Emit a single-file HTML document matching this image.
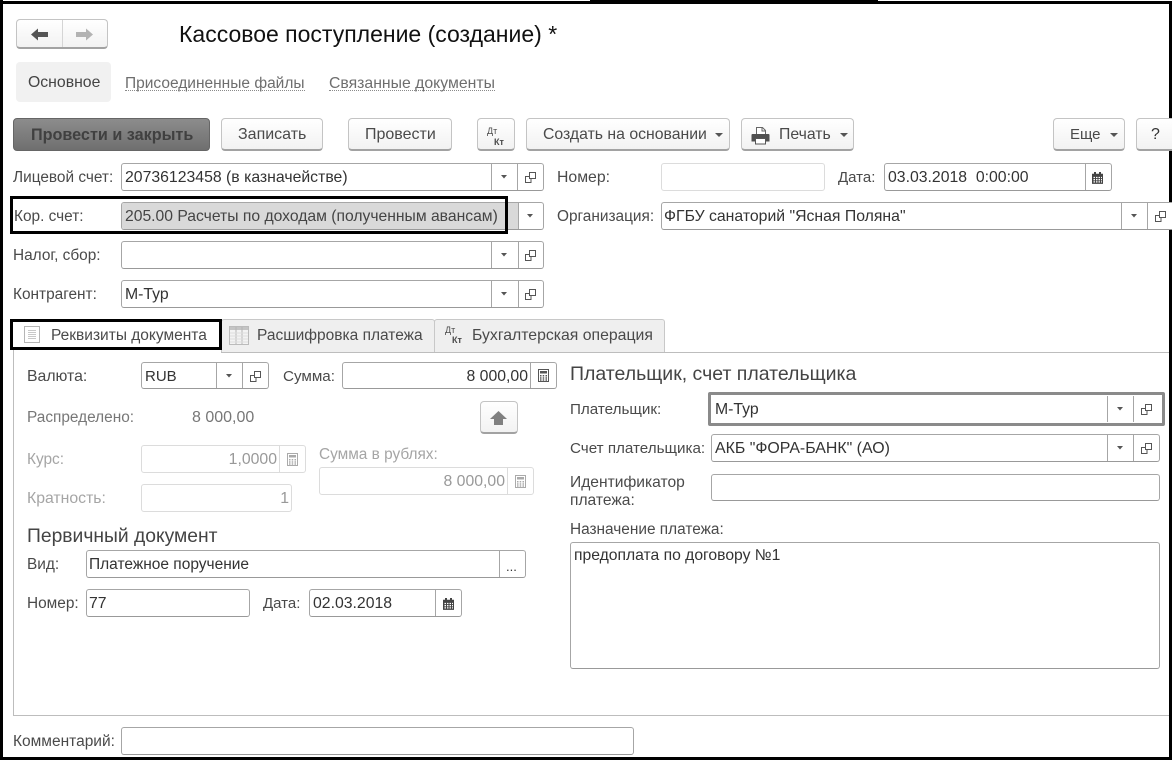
<!DOCTYPE html>
<html lang="ru"><head><meta charset="utf-8"><title>Кассовое поступление</title>
<style>
html,body{margin:0;padding:0;background:#fff}
#p{position:relative;width:1172px;height:760px;overflow:hidden;background:#fff;font:15.4px/18px "Liberation Sans",Arial,sans-serif;color:#4a4a4a}
#p *{box-sizing:border-box}
.t{position:absolute;white-space:pre;height:18px;line-height:18px;margin-top:1px}
.v{color:#333;font-size:15.8px}
.bt{font-size:16px}
.m{font-size:15.8px}
.g{color:#a5a5a5}
.f{position:absolute;background:#fff;border:1px solid #a6a6a6;border-radius:3px;border-bottom-color:#999}
.d{border-color:#dcdcdc}
.s{position:absolute;width:1px;background:#a6a6a6;display:block}
.sd{background:#dcdcdc}
.b{position:absolute;top:118px;height:33px;border:1px solid #c4c4c4;border-bottom:2px solid #a2a2a2;border-radius:4px;background:linear-gradient(#fff,#f2f2f2)}
.k{position:absolute;background:#000}
svg{position:absolute;overflow:visible}
.tab{position:absolute;top:319px;height:33px;background:#efefef;border:1px solid #c8c8c8;border-bottom:none;border-radius:3px 3px 0 0}
.l{border-bottom:1px dotted #8a8a8a;height:17px;line-height:19px;margin-top:0}
</style></head><body><div id="p">
<svg width="0" height="0" style="position:absolute"><defs>
<g id="c" fill="none" stroke="#555" stroke-width="1"><path d="M4.500.5h6v6h-6z"/><path d="M4 4.500H.5v6h5.500V7"/></g>
<path id="a" d="M0 0h8l-4 4z" fill="#555"/>
<path id="a2" d="M0 0h6l-3 3.500z" fill="#555"/>
<g id="cal" transform="scale(1 .88)"><path d="M1 2h2V0h2v2h3V0h2v2h2v11.500H1z" fill="#444"/><path d="M2.500 5.500h1.500v1.500h-1.500zM5 5.500h1.500v1.500H5zM7.500 5.500H9v1.500H7.500zM10 5.500h1v1.500h-1zM2.500 8h1.500v1.500h-1.500zM5 8h1.500v1.500H5zM7.500 8H9v1.500H7.500zM10 8h1v1.500h-1zM2.500 10.500h1.500V12h-1.500zM5 10.500h1.500V12H5zM7.500 10.500H9V12H7.500zM10 10.500h1V12h-1z" fill="#fff"/></g>
<g id="ca"><path d="M.5.5h10v12H.5z" fill="#fff" stroke="#555"/><path d="M2 2h7v2.500H2z" fill="#555"/><path d="M2 6h1.500v1.500H2zM4.700 6h1.500v1.500H4.700zM7.500 6H9v1.500H7.500zM2 8.200h1.500v1.500H2zM4.700 8.200h1.500v1.500H4.700zM7.500 8.200H9v1.500H7.500zM2 10.300h1.500v1.500H2zM4.700 10.300h1.500v1.500H4.700zM7.500 10.300H9v1.500H7.500z" fill="#555"/></g>
<g id="cg"><path d="M.5.5h10v12H.5z" fill="#fff" stroke="#aaa"/><path d="M2 2h7v2.500H2z" fill="#aaa"/><path d="M2 6h1.500v1.500H2zM4.700 6h1.500v1.500H4.700zM7.500 6H9v1.500H7.500zM2 8.200h1.500v1.500H2zM4.700 8.200h1.500v1.500H4.700zM7.500 8.200H9v1.500H7.500zM2 10.300h1.500v1.500H2zM4.700 10.300h1.500v1.500H4.700zM7.500 10.300H9v1.500H7.500z" fill="#aaa"/></g>
</defs></svg>

<!-- outer frame -->
<div class="k" style="left:590px;top:0;width:288px;height:1px"></div>
<div class="k" style="left:0;top:1px;width:1172px;height:3px"></div>
<div class="k" style="left:0;top:0;width:3px;height:760px"></div>
<div class="k" style="left:1169px;top:1px;width:3px;height:759px"></div>
<div class="k" style="left:0;top:757px;width:1172px;height:3px"></div>

<!-- nav -->
<div class="b" style="left:16px;top:19px;width:92px;height:30px"></div>
<i class="s" style="left:62px;top:20px;height:27px;background:#d5d5d5"></i>
<svg style="left:0;top:0" width="120" height="60"><path d="M31 34.500l7-6v3.500h10v5H38v3.500z" fill="#555"/><path d="M93 34.500l-7-6v3.500H76v5h10v3.500z" fill="#b3b3b3"/></svg>
<span class="t" style="left:179px;top:20px;font-size:23px;height:26px;line-height:26px;color:#111">Кассовое поступление (создание) *</span>

<div style="position:absolute;left:16px;top:62px;width:95px;height:40px;background:#f1f1f1;border-radius:4px"></div>
<span class="t m" style="left:28px;top:73px;color:#444">Основное</span>
<span class="t l" style="left:125px;top:74px;color:#6e6e6e;font-size:15.500px">Присоединенные файлы</span>
<span class="t l" style="left:329px;top:74px;color:#6e6e6e;font-size:15.800px">Связанные документы</span>

<!-- toolbar -->
<div class="b" style="left:13px;width:197px;background:linear-gradient(#8c8c8c,#6f6f6f);border:1px solid #666"></div>
<span class="t bt" style="left:31px;top:125px;font-weight:bold;color:#404040;font-size:16.200px">Провести и закрыть</span>
<div class="b" style="left:221px;width:102px"></div><span class="t bt" style="left:238px;top:125px">Записать</span>
<div class="b" style="left:348px;width:104px"></div><span class="t bt" style="left:365px;top:125px">Провести</span>
<div class="b" style="left:477px;width:38px"></div>
<span class="t" style="left:487px;top:121px;font-size:9px">Дт</span><span class="t" style="left:494px;top:132px;font-size:9px;font-weight:bold">Кт</span>
<div class="b" style="left:526px;width:204px"></div><span class="t m" style="left:543px;top:125px">Создать на основании</span>
<svg style="left:715px;top:133px" width="8" height="5"><use href="#a"/></svg>
<div class="b" style="left:741px;width:113px"></div>
<svg style="left:751px;top:127px" width="19" height="18"><path d="M5.500.5h6l3 3v5h-9z" fill="#fff" stroke="#666"/><path d="M11 .5v3.500h3.500" fill="none" stroke="#666"/><path d="M1.500 7h16q1 0 1 1v6.500h-18V8q0-1 1-1z" fill="#505050"/><path d="M4.500 11.500h10v5.500h-10z" fill="#fff" stroke="#555"/></svg>
<span class="t m" style="left:779px;top:125px">Печать</span>
<svg style="left:840px;top:133px" width="8" height="5"><use href="#a"/></svg>
<div class="b" style="left:1053px;width:72px"></div><span class="t" style="left:1070px;top:125px;font-size:15px">Еще</span>
<svg style="left:1110px;top:133px" width="8" height="5"><use href="#a"/></svg>
<div class="b" style="left:1136px;width:40px"></div><span class="t bt" style="left:1151px;top:125px;color:#333">?</span>

<!-- Row 1 -->
<span class="t" style="left:13px;top:168px">Лицевой счет:</span>
<div class="f" style="left:121px;top:163px;width:423px;height:28px"></div>
<span class="t v" style="left:125px;top:168px">20736123458 (в казначействе)</span>
<i class="s" style="left:491px;top:164px;height:26px"></i><i class="s" style="left:517px;top:164px;height:26px"></i>
<svg style="left:501px;top:175px" width="6" height="4"><use href="#a2"/></svg>
<svg style="left:525px;top:172px" width="12" height="12"><use href="#c"/></svg>
<span class="t m" style="left:557px;top:168px">Номер:</span>
<div class="f d" style="left:661px;top:163px;width:164px;height:28px"></div>
<span class="t" style="left:838px;top:168px;font-size:15px">Дата:</span>
<div class="f" style="left:884px;top:163px;width:228px;height:28px"></div>
<span class="t v" style="left:888px;top:168px">03.03.2018  0:00:00</span>
<i class="s" style="left:1085px;top:164px;height:26px"></i>
<svg style="left:1091px;top:172px" width="13" height="12"><use href="#cal"/></svg>

<!-- Row 2 -->
<div class="f" style="left:121px;top:202px;width:423px;height:28px"></div>
<div style="position:absolute;left:122px;top:203px;width:396px;height:26px;background:#d9d9d9;border-radius:2px 0 0 2px"></div>
<i class="s" style="left:518px;top:203px;height:26px"></i>
<svg style="left:527px;top:214px" width="6" height="4"><use href="#a2"/></svg>
<span class="t" style="left:14px;top:207px">Кор. счет:</span>
<span class="t v" style="left:125px;top:207px;color:#444;font-size:15.700px">205.00 Расчеты по доходам (полученным авансам)</span>
<div style="position:absolute;left:10px;top:196px;width:498px;height:38px;border:3px solid #000"></div>
<span class="t" style="left:557px;top:207px">Организация:</span>
<div class="f" style="left:661px;top:202px;width:520px;height:28px"></div>
<span class="t v" style="left:664px;top:207px">ФГБУ санаторий "Ясная Поляна"</span>
<i class="s" style="left:1121px;top:203px;height:26px"></i><i class="s" style="left:1147px;top:203px;height:26px"></i>
<svg style="left:1131px;top:214px" width="6" height="4"><use href="#a2"/></svg>
<svg style="left:1155px;top:211px" width="12" height="12"><use href="#c"/></svg>

<!-- Row 3 -->
<span class="t" style="left:13px;top:246px">Налог, сбор:</span>
<div class="f" style="left:121px;top:241px;width:423px;height:28px"></div>
<i class="s" style="left:491px;top:242px;height:26px"></i><i class="s" style="left:518px;top:242px;height:26px"></i>
<svg style="left:501px;top:253px" width="6" height="4"><use href="#a2"/></svg>
<svg style="left:525px;top:250px" width="12" height="12"><use href="#c"/></svg>

<!-- Row 4 -->
<span class="t" style="left:13px;top:285px">Контрагент:</span>
<div class="f" style="left:121px;top:280px;width:423px;height:28px"></div>
<span class="t v" style="left:125px;top:285px">М-Тур</span>
<i class="s" style="left:491px;top:281px;height:26px"></i><i class="s" style="left:518px;top:281px;height:26px"></i>
<svg style="left:501px;top:292px" width="6" height="4"><use href="#a2"/></svg>
<svg style="left:525px;top:289px" width="12" height="12"><use href="#c"/></svg>

<!-- Tabs -->
<div class="tab" style="left:221px;width:214px"></div>
<div class="tab" style="left:434px;width:231px"></div>
<div style="position:absolute;left:221px;top:352px;width:948px;height:1px;background:#bdbdbd"></div>
<div style="position:absolute;left:13px;top:350px;width:1px;height:366px;background:#bdbdbd"></div>
<div style="position:absolute;left:13px;top:715px;width:1156px;height:1px;background:#bdbdbd"></div>
<div style="position:absolute;left:10px;top:319px;width:212px;height:31px;border:3px solid #000;background:#fff"></div>
<svg style="left:24px;top:326px" width="17" height="18"><path d="M.5.500h15v16H.5z" fill="#fff" stroke="#b5b5b5"/><path d="M4 4.500h8M4 6.500h8M4 8.500h8M4 10.500h8M4 12.500h8" stroke="#c8c8c8"/></svg>
<span class="t" style="left:51px;top:326px;font-size:15.500px">Реквизиты документа</span>
<svg style="left:229px;top:326px" width="20" height="19"><path d="M.5.500h19v18H.5z" fill="#f3f3f3" stroke="#bbb"/><path d="M1 1h18v3H1z" fill="#c4c4c4"/><path d="M7 1v17M13 1v17" stroke="#b5b5b5"/><path d="M1 7h18M1 10h18M1 13h18M1 16h18" stroke="#dedede"/></svg>
<span class="t" style="left:257px;top:326px;font-size:15.500px">Расшифровка платежа</span>
<span class="t" style="left:445px;top:320px;font-size:9px">Дт</span><span class="t" style="left:452px;top:330px;font-size:9px;font-weight:bold">Кт</span>
<span class="t m" style="left:472px;top:326px">Бухгалтерская операция</span>

<!-- Left panel -->
<span class="t m" style="left:27px;top:367px">Валюта:</span>
<div class="f" style="left:141px;top:362px;width:128px;height:27px"></div>
<span class="t v" style="left:145px;top:367px;font-size:15px">RUB</span>
<i class="s" style="left:216px;top:363px;height:25px"></i><i class="s" style="left:242px;top:363px;height:25px"></i>
<svg style="left:226px;top:374px" width="6" height="4"><use href="#a2"/></svg>
<svg style="left:250px;top:371px" width="12" height="12"><use href="#c"/></svg>
<span class="t" style="left:283px;top:367px;font-size:15.200px">Сумма:</span>
<div class="f" style="left:342px;top:362px;width:215px;height:27px"></div>
<span class="t v" style="right:644px;top:367px">8 000,00</span>
<i class="s" style="left:530px;top:363px;height:25px"></i>
<svg style="left:538px;top:369px" width="11" height="13"><use href="#ca"/></svg>

<span class="t" style="left:27px;top:408px;color:#777">Распределено:</span>
<span class="t bt" style="left:192px;top:408px;color:#777">8 000,00</span>
<div class="b" style="left:480px;top:401px;width:38px;height:33px"></div>
<svg style="left:0;top:0" width="520" height="430"><path d="M490 419l8.500-8 8.500 8h-4v6h-9v-6z" fill="#808080"/></svg>

<span class="t g" style="left:27px;top:450px">Курс:</span>
<div class="f d" style="left:141px;top:445px;width:165px;height:28px"></div>
<span class="t g m" style="right:895px;top:450px;color:#999">1,0000</span>
<i class="s sd" style="left:279px;top:446px;height:26px"></i>
<svg style="left:287px;top:453px" width="11" height="13"><use href="#cg"/></svg>
<span class="t g" style="left:319px;top:445px">Сумма в рублях:</span>
<div class="f d" style="left:319px;top:467px;width:215px;height:28px"></div>
<span class="t g m" style="right:667px;top:472px;color:#999">8 000,00</span>
<i class="s sd" style="left:507px;top:468px;height:26px"></i>
<svg style="left:515px;top:475px" width="11" height="13"><use href="#cg"/></svg>
<span class="t g m" style="left:27px;top:489px">Кратность:</span>
<div class="f d" style="left:141px;top:484px;width:151px;height:28px"></div>
<span class="t g m" style="right:883px;top:489px;color:#999">1</span>

<span class="t" style="left:27px;top:525px;font-size:19.300px;height:22px;line-height:22px;color:#444">Первичный документ</span>
<span class="t" style="left:27px;top:555px">Вид:</span>
<div class="f" style="left:86px;top:550px;width:440px;height:28px"></div>
<span class="t v" style="left:89px;top:555px;font-size:15.500px">Платежное поручение</span>
<i class="s" style="left:499px;top:551px;height:26px"></i>
<span class="t v" style="left:506px;top:557px;font-size:13px">...</span>
<span class="t" style="left:27px;top:594px">Номер:</span>
<div class="f" style="left:86px;top:589px;width:164px;height:28px"></div>
<span class="t v" style="left:89px;top:594px">77</span>
<span class="t" style="left:263px;top:594px;font-size:15px">Дата:</span>
<div class="f" style="left:309px;top:589px;width:153px;height:28px"></div>
<span class="t v" style="left:313px;top:594px">02.03.2018</span>
<i class="s" style="left:435px;top:590px;height:26px"></i>
<svg style="left:442px;top:598px" width="13" height="12"><use href="#cal"/></svg>

<!-- Right panel -->
<span class="t" style="left:570px;top:362px;font-size:19.500px;height:22px;line-height:22px;color:#444">Плательщик, счет плательщика</span>
<span class="t" style="left:570px;top:400px;font-size:15.200px">Плательщик:</span>
<div class="f" style="left:708px;top:392px;width:457px;height:34px;border:3px solid #8a8a8a;border-radius:2px"></div>
<span class="t v" style="left:715px;top:400px">М-Тур</span>
<i class="s" style="left:1107px;top:396px;height:26px"></i><i class="s" style="left:1133px;top:396px;height:26px"></i>
<svg style="left:1117px;top:407px" width="6" height="4"><use href="#a2"/></svg>
<svg style="left:1141px;top:404px" width="12" height="12"><use href="#c"/></svg>
<span class="t" style="left:570px;top:439px;font-size:15.200px">Счет плательщика:</span>
<div class="f" style="left:711px;top:434px;width:449px;height:28px"></div>
<span class="t v" style="left:715px;top:439px;font-size:15.900px">АКБ "ФОРА-БАНК" (АО)</span>
<i class="s" style="left:1107px;top:435px;height:26px"></i><i class="s" style="left:1133px;top:435px;height:26px"></i>
<svg style="left:1117px;top:446px" width="6" height="4"><use href="#a2"/></svg>
<svg style="left:1141px;top:443px" width="12" height="12"><use href="#c"/></svg>
<span class="t" style="left:570px;top:473px;font-size:15.600px">Идентификатор</span>
<span class="t" style="left:570px;top:491px;font-size:15.600px">платежа:</span>
<div class="f" style="left:711px;top:474px;width:449px;height:27px"></div>
<span class="t" style="left:570px;top:520px">Назначение платежа:</span>
<div class="f" style="left:570px;top:542px;width:590px;height:127px"></div>
<span class="t v" style="left:574px;top:546px;font-size:15.700px">предоплата по договору №1</span>

<!-- Comment -->
<span class="t" style="left:13px;top:732px;font-size:15.500px">Комментарий:</span>
<div class="f" style="left:121px;top:727px;width:513px;height:28px"></div>
</div></body></html>
